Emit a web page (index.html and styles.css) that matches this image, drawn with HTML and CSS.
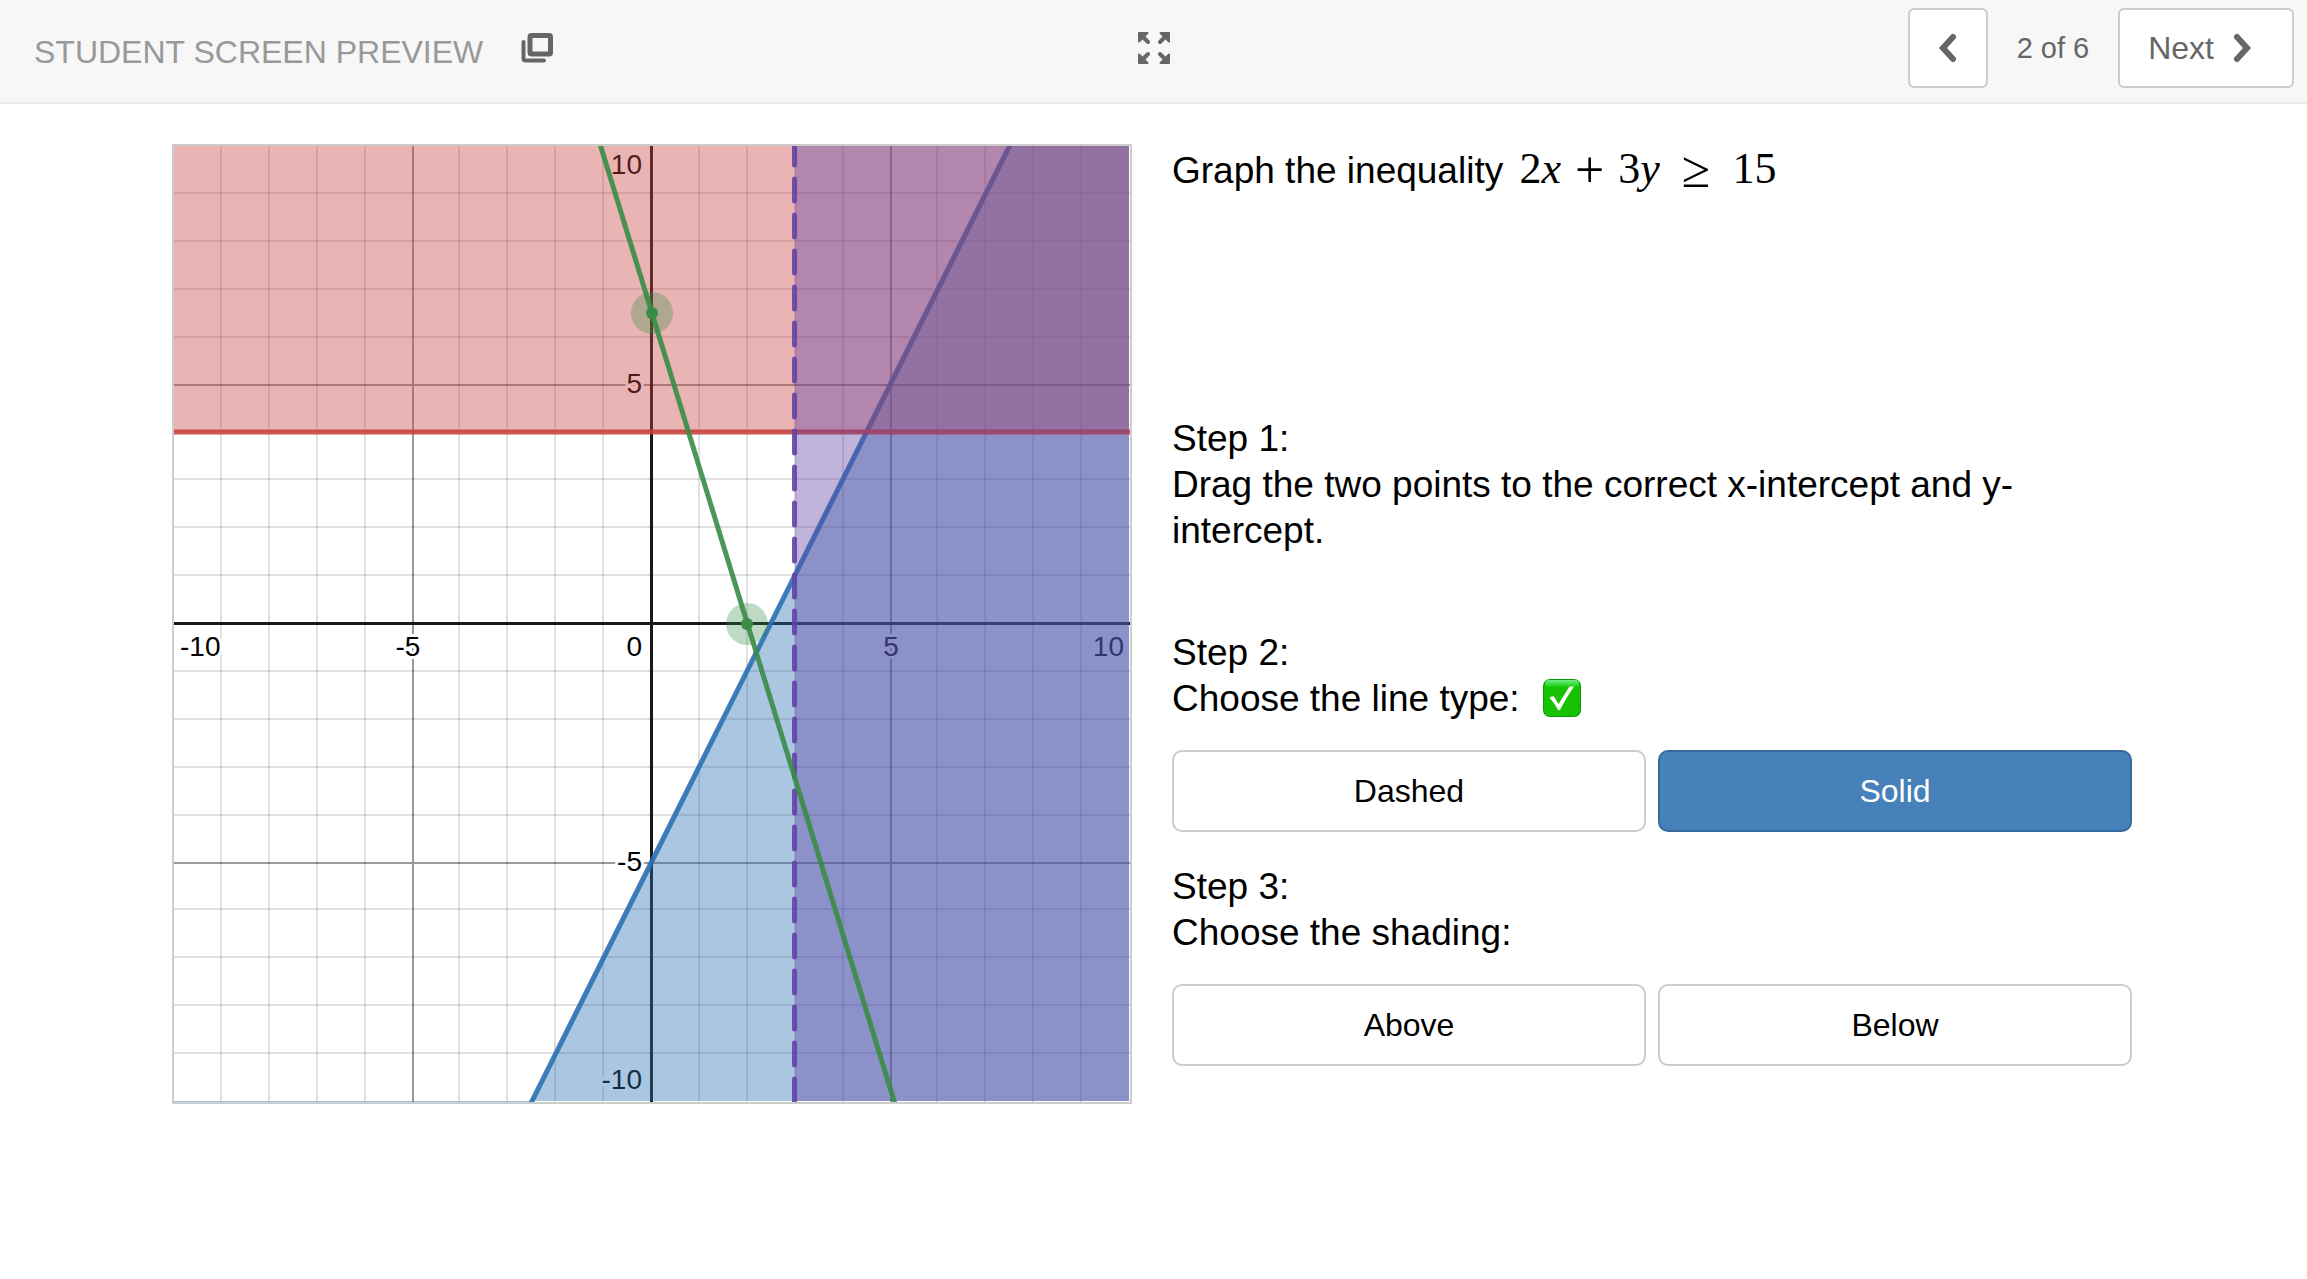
FILE: index.html
```html
<!DOCTYPE html>
<html lang="en">
<head>
  <meta charset="UTF-8" />
  <meta name="viewport" content="width=device-width, initial-scale=1.0"/>
  <title>Student Screen Preview</title>
  <link rel="stylesheet" href="styles.css">
</head>
<body>
  <header class="topbar">
    <div class="topbar-left">
      <h1>STUDENT SCREEN PREVIEW</h1>
      <button class="icon-btn" type="button" aria-label="Open in new window">
        <svg width="32" height="30" viewBox="0 0 32 30">
          <rect x="9" y="2.5" width="20.5" height="18.5" rx="1.5" fill="none" stroke="#666" stroke-width="5"/>
          <path d="M2.5 9V25.5Q2.5 27.5 4.500 27.500H23" fill="none" stroke="#666" stroke-width="4" stroke-linecap="round"/>
        </svg>
      </button>
    </div>
    <button class="icon-btn" type="button" aria-label="Full screen">
      <svg width="32" height="32" viewBox="0 0 32 32">
        <g id="arrow">
          <path d="M1 1H9.500L1 9.500Z" fill="#666" stroke="#666" stroke-width="2" stroke-linejoin="round"/>
          <path d="M4 4L10 10" stroke="#666" stroke-width="4" stroke-linecap="round"/>
        </g>
        <use href="#arrow" transform="matrix(-1 0 0 1 32 0)"/>
        <use href="#arrow" transform="matrix(1 0 0 -1 0 32)"/>
        <use href="#arrow" transform="matrix(-1 0 0 -1 32 32)"/>
      </svg>
    </button>
    <nav class="pager">
      <button class="pager-btn" type="button" aria-label="Previous">
        <svg width="20" height="30" viewBox="0 0 20 30"><path d="M15 4L5 15L15 26" fill="none" stroke="#666" stroke-width="6" stroke-linecap="round" stroke-linejoin="miter"/></svg>
      </button>
      <span class="pager-count">2 of 6</span>
      <button class="pager-btn" type="button">
        Next
        <svg width="20" height="30" viewBox="0 0 20 30"><path d="M5 4L15 15L5 26" fill="none" stroke="#666" stroke-width="6" stroke-linecap="round" stroke-linejoin="miter"/></svg>
      </button>
    </nav>
  </header>

  <main class="screen">
    <div class="graph">
      <svg viewBox="0 0 956 956" role="img" aria-label="Coordinate plane from -10 to 10">
        <!-- grid -->
        <path class="grid-minor" d="M47 0V956M95 0V956M143 0V956M191 0V956M285 0V956M333 0V956M381 0V956M429 0V956M525 0V956M573 0V956M621 0V956M669 0V956M763 0V956M811 0V956M859 0V956M907 0V956"/>
        <path class="grid-minor" d="M0 47H956M0 95H956M0 143H956M0 191H956M0 285H956M0 333H956M0 381H956M0 429H956M0 525H956M0 573H956M0 621H956M0 669H956M0 763H956M0 811H956M0 859H956M0 907H956"/>
        <path class="grid-major" d="M239 0V956M717 0V956M0 239H956M0 717H956"/>
        <path class="axis" d="M477.5 0V956M0 477.500H956"/>

        <g class="labels">
          <text x="6" y="510">-10</text>
          <text x="234" y="510" text-anchor="middle">-5</text>
          <text x="717" y="510" text-anchor="middle">5</text>
          <text x="950" y="510" text-anchor="end">10</text>
          <text x="468" y="510" text-anchor="end">0</text>
          <text x="468" y="28" text-anchor="end">10</text>
          <text x="468" y="247" text-anchor="end">5</text>
          <text x="468" y="725" text-anchor="end">-5</text>
          <text x="468" y="943" text-anchor="end">-10</text>
        </g>

        <!-- y <= 2x - 5 -->
        <path class="blue-fill" d="M835 0H955V955H357Z"/>
        <path class="blue-edge" d="M0 955.500H357"/>
        <path class="blue-line" d="M357 957L836 -1"/>
        <!-- y >= 4 -->
        <path class="red-fill" d="M0 0H955V286H0Z"/>
        <path class="red-line" d="M0 286H956"/>
        <!-- x > 3 -->
        <path class="purple-fill" d="M621 0H955V955H621Z"/>
        <path class="purple-line" d="M620.5 -3V956"/>
        <!-- draggable line -->
        <path class="green-line" d="M426 -2L721 958"/>
        <circle class="halo" cx="478" cy="167" r="21"/>
        <circle class="point" cx="478" cy="167" r="6"/>
        <circle class="halo" cx="573" cy="478" r="21"/>
        <circle class="point" cx="573" cy="478" r="6"/>
      </svg>
    </div>

    <div class="steps">
      <p class="prompt">Graph the inequality
        <span class="math">2<i>x</i><span class="plus">+</span>3<i>y</i><span class="rel">≥</span>15</span>
      </p>

      <section class="step">
        <p>Step 1:<br>Drag the two points to the correct x-intercept and y-intercept.</p>
      </section>

      <section class="step">
        <p>Step 2:<br>Choose the line type:
          <svg class="check" width="38" height="38" viewBox="0 0 38 38" role="img" aria-label="Correct">
            <defs>
              <linearGradient id="shine" x1="0" y1="0" x2="0" y2="1">
                <stop offset="0" stop-color="#6ef08a"/>
                <stop offset="1" stop-color="#18c90a"/>
              </linearGradient>
            </defs>
            <rect width="38" height="38" rx="7" fill="#0a9a04"/>
            <rect x="1" y="1" width="36" height="36" rx="6" fill="#17c202"/>
            <rect x="2" y="1" width="34" height="7" rx="4" fill="url(#shine)"/>
            <path d="M6.500 19Q8.500 16.500 11 17.500L15.500 25L26.500 7.500H31Q23 19 17.500 30Q16 32.500 14.500 30Q11 23 6.500 19Z" fill="#fff"/>
          </svg>
        </p>
        <div class="choices">
          <button class="choice" type="button">Dashed</button>
          <button class="choice selected" type="button" aria-pressed="true">Solid</button>
        </div>
      </section>

      <section class="step">
        <p>Step 3:<br>Choose the shading:</p>
        <div class="choices">
          <button class="choice" type="button">Above</button>
          <button class="choice" type="button">Below</button>
        </div>
      </section>
    </div>
  </main>
</body>
</html>
```
FILE: styles.css
```css
* {
  box-sizing: border-box;
}
body {
  margin: 0;
  background: #fff;
  color: #000;
  font-family: 'Liberation Sans', Arial, sans-serif;
}
button {
  font-family: inherit;
  cursor: pointer;
}
h1, p {
  margin: 0;
}
svg {
  display: block;
}

/* Top bar */
.topbar {
  display: grid;
  grid-template-columns: 1fr auto 1fr;
  align-items: center;
  padding: 8px 0 14px;
  background: #f7f7f7;
  border-bottom: 2px solid #ebebeb;
}
.topbar-left {
  display: flex;
  align-items: center;
  gap: 38px;
  padding-left: 34px;
}
.topbar h1 {
  padding-top: 8px;
  font-size: 32px;
  font-weight: 400;
  color: #999;
}
.icon-btn {
  padding: 0;
  border: none;
  background: none;
}
.pager {
  display: flex;
  align-items: center;
  justify-content: flex-end;
  padding-right: 13px;
}
.pager-btn {
  display: flex;
  align-items: center;
  justify-content: center;
  gap: 18px;
  min-width: 80px;
  height: 80px;
  padding: 0 28px;
  border: 2px solid #ccc;
  border-radius: 6px;
  background: #fff;
  color: #666;
  font-size: 32px;
}
.pager-btn:last-child {
  padding-right: 40px;
}
.pager-count {
  padding: 0 29px;
  font-size: 29px;
  color: #666;
}

/* Activity */
.screen {
  display: grid;
  grid-template-columns: 1fr 1fr;
  gap: 40px;
  align-items: start;
  padding: 40px 175px 40px 172px;
}
.graph {
  border: 2px solid #ccc;
}
.grid-minor,
.grid-major,
.axis {
  fill: none;
  stroke: #000;
  stroke-width: 2;
}
.grid-minor {
  stroke-opacity: 0.12;
}
.grid-major {
  stroke-opacity: 0.4;
}
.axis {
  stroke-width: 3;
  stroke-opacity: 0.9;
}
.labels text {
  font-size: 28px;
  stroke: #fff;
  stroke-width: 6px;
  stroke-linejoin: round;
  paint-order: stroke;
}
.red-fill {
  fill: #c74440;
  fill-opacity: 0.4;
}
.blue-fill {
  fill: #2d70b3;
  fill-opacity: 0.4;
}
.purple-fill {
  fill: #6042a6;
  fill-opacity: 0.4;
}
.red-line,
.blue-line,
.purple-line,
.green-line {
  fill: none;
  stroke-width: 5;
  stroke-opacity: 0.9;
}
.red-line {
  stroke: #c74440;
}
.blue-line {
  stroke: #2d70b3;
}
.blue-edge {
  stroke: #2d70b3;
  stroke-opacity: 0.4;
}
.purple-line {
  stroke: #6042a6;
  stroke-dasharray: 22 14;
  stroke-linecap: round;
}
.green-line {
  stroke: #388c46;
}
.halo {
  fill: #388c46;
  fill-opacity: 0.32;
}
.point {
  fill: #388c46;
}

/* Instructions */
.steps {
  padding-top: 4px;
  font-size: 37px;
  line-height: 46px;
}
.prompt {
  height: 268px;
}
.math {
  margin-left: 6px;
  font-family: 'Liberation Serif', 'Times New Roman', serif;
  font-size: 44px;
  line-height: 0;
  white-space: nowrap;
}
.plus,
.rel {
  font-size: 52px;
  vertical-align: -4px;
}
.plus {
  margin: 0 14px;
}
.rel {
  margin: 0 22px;
}
.step {
  margin-bottom: 32px;
}
.step:nth-of-type(1) {
  margin-bottom: 76px;
}
.check {
  display: inline-block;
  margin-left: 13px;
  vertical-align: -6px;
}
.choices {
  display: grid;
  grid-template-columns: 1fr 1fr;
  gap: 12px;
  margin-top: 28px;
}
.choice {
  height: 82px;
  border: 2px solid #ccc;
  border-radius: 10px;
  background: #fff;
  color: #000;
  font-size: 32px;
}
.choice.selected {
  background: #4681ba;
  border-color: #376a9c;
  color: #fff;
}

@media (max-width: 1200px) {
  .screen {
    grid-template-columns: 1fr;
    padding: 24px;
  }
  .prompt {
    height: auto;
    margin-bottom: 48px;
  }
}
```
